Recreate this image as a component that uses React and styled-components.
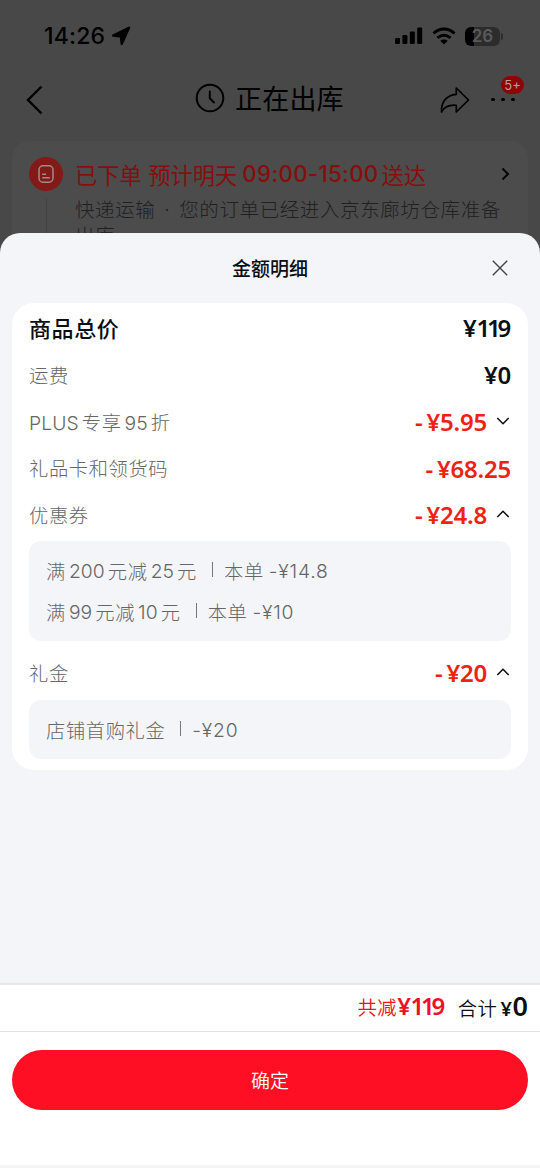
import { useState } from 'react';
import styled, { createGlobalStyle } from 'styled-components';

const details = [
    { id: 'total', label: ['商品总价'], price: '¥119', strong: true, height: 51 },
    { id: 'ship', label: ['运费'], price: '¥0', height: 43 },
    { id: 'plus', label: ['PLUS', '专享', '95', '折'], price: '¥5.95', minus: true, fold: true, height: 51 },
    { id: 'card', label: ['礼品卡和领货码'], price: '¥68.25', minus: true, height: 42 },
    {
        id: 'coupon', label: ['优惠券'], price: '¥24.8', minus: true, fold: true, height: 51,
        items: [
            [['满', '200', '元减', '25', '元'], '本单', '-¥14.8'],
            [['满', '99', '元减', '10', '元'], '本单', '-¥10'],
        ],
    },
    {
        id: 'gift', label: ['礼金'], price: '¥20', minus: true, fold: true, height: 59, top: 6,
        items: [[['店铺首购礼金'], '', '-¥20']],
    },
];

function Words({ list }) {
    return list.map((w, i) => (/[\dA-Z]/.test(w) ? <Num key={i} $first={i === 0}>{w}</Num> : <span key={i}>{w}</span>));
}

// the digit 1 sits closer to its neighbour than the other digits
function Amount({ value }) {
    return value.split('11').map((part, i) => (
        <span key={i}>
            {i > 0 && <Tight>11</Tight>}
            {part}
        </span>
    ));
}

function StatusBar() {
    return (
        <Status>
            <Clock>14:26</Clock>
            <svg width="20" height="20" viewBox="0 0 20 20">
                <path d="M2.200 9.500 18 1.800 10.700 18 10 10.500Z" fill="#000" stroke="#000" strokeWidth="2.400" strokeLinejoin="round" />
            </svg>
            <StatusIcons>
                <svg width="28" height="18" viewBox="0 0 28 18" fill="#000">
                    <rect x="0" y="11" width="5" height="6" rx="1.300" />
                    <rect x="7.400" y="8" width="5" height="9" rx="1.300" />
                    <rect x="14.800" y="4.500" width="5" height="12.500" rx="1.300" />
                    <rect x="22.200" y="0.500" width="5" height="16.500" rx="1.300" />
                </svg>
                <svg width="24" height="18" viewBox="0 0 24 18" fill="none" stroke="#000" strokeWidth="3">
                    <path d="M1.500 6.500C7.500.6 16.500.6 22.500 6.500" />
                    <path d="M5.500 10.800C9.300 7.300 14.700 7.300 18.500 10.800" />
                    <path d="M12 17.500 8.200 13.700C10.300 12 13.700 12 15.800 13.700Z" fill="#000" stroke="none" />
                </svg>
                <Battery><span>26</span></Battery>
            </StatusIcons>
        </Status>
    );
}

function Chevron({ up }) {
    return (
        <svg width="14" height="10" viewBox="0 0 14 10" fill="none" stroke="#111" strokeWidth="1.600">
            <path d={up ? 'M1.300 8 7 2.300 12.700 8' : 'M1.300 2 7 7.700 12.700 2'} />
        </svg>
    );
}

function App() {
    const [open, setOpen] = useState({ coupon: true, gift: true });

    const toggle = (id) => {
        setOpen({ ...open, [id]: !open[id] });
    };

    return (
        <Screen>
            <GlobalStyle />
            <StatusBar />
            <NavBar>
                <svg width="18" height="30" viewBox="0 0 18 30" fill="none" stroke="#000" strokeWidth="2.400">
                    <path d="M15.500 1.500 2 15 15.500 28.500" />
                </svg>
                <NavTitle>
                    <svg width="30" height="30" viewBox="0 0 30 30" fill="none" stroke="#000" strokeWidth="2" strokeLinecap="round">
                        <circle cx="15" cy="15" r="13.300" />
                        <path d="M14.800 8.500V15.300L19 19.500" />
                    </svg>
                    正在出库
                </NavTitle>
                <NavRight>
                    <svg width="30" height="28" viewBox="0 0 30 28" fill="none" stroke="#000" strokeWidth="1.700" strokeLinejoin="round">
                        <path d="M16.300 2 28.500 14 16.300 26V19.300C9 18.700 4.500 20.500 1.500 26 1 16 6.500 9 16.300 8.300Z" />
                    </svg>
                    <More>
                        <i /><i /><i />
                        <Badge>5+</Badge>
                    </More>
                </NavRight>
            </NavBar>
            <OrderCard>
                <Timeline>
                    <Dot>
                        <svg width="18" height="20" viewBox="0 0 18 20" fill="none" stroke="#a08c88" strokeWidth="1.500">
                            <rect x="2" y="1.800" width="14" height="16.400" rx="4" />
                            <path d="M5.200 10.300H9M5.200 13.800H12.800" />
                        </svg>
                    </Dot>
                    <Stem />
                </Timeline>
                <OrderText>
                    <OrderTitle>
                        已下单 预计明天<b>09:00-15:00</b>送达
                        <svg width="9" height="14" viewBox="0 0 9 14" fill="none" stroke="#000" strokeWidth="1.900">
                            <path d="M1.500 1.500 7 7 1.500 12.500" />
                        </svg>
                    </OrderTitle>
                    <OrderDesc>快递运输 · 您的订单已经进入京东廊坊仓库准备出库</OrderDesc>
                </OrderText>
            </OrderCard>

            <Sheet>
                <SheetHead>
                    金额明细
                    <Close>
                        <svg width="16" height="16" viewBox="0 0 16 16" stroke="#444" strokeWidth="1.400">
                            <path d="M.8.8 15.200 15.200M15.200.8.8 15.200" />
                        </svg>
                    </Close>
                </SheetHead>
                <Card>
                    {details.map((d) => (
                        <div key={d.id}>
                            <Row $height={d.height} $top={d.top}>
                                <Label $strong={d.strong}>
                                    <Words list={d.label} />
                                </Label>
                                <Price $red={d.minus}>
                                    {d.minus && <Minus>-</Minus>}
                                    <Amount value={d.price} />
                                </Price>
                                {d.fold && (
                                    <Fold onClick={() => toggle(d.id)}>
                                        <Chevron up={open[d.id]} />
                                    </Fold>
                                )}
                            </Row>
                            {d.items && open[d.id] && (
                                <SubBox>
                                    {d.items.map(([words, scope, value]) => (
                                        <SubRow key={value}>
                                            <Words list={words} />
                                            <Divider />
                                            {scope && <Scope>{scope}</Scope>}
                                            <Value>{value}</Value>
                                        </SubRow>
                                    ))}
                                </SubBox>
                            )}
                        </div>
                    ))}
                </Card>
                <Summary>
                    <Saved>共减<b><Amount value="¥119" /></b></Saved>
                    <Total>合计<small>¥</small><b>0</b></Total>
                </Summary>
                <Footer>
                    <Confirm>确定</Confirm>
                </Footer>
            </Sheet>
        </Screen>
    );
}

const GlobalStyle = createGlobalStyle`
    * {
        box-sizing: border-box;
    }
    body {
        margin: 0;
        background: #484848;
        font-family: Inter, "Noto Sans CJK SC", sans-serif;
    }
    button {
        font-family: inherit;
        border: 0;
        padding: 0;
        background: none;
    }
    svg {
        display: block;
        flex: none;
    }
`;

const Screen = styled.div`
    position: relative;
    width: 540px;
    height: 1168px;
    overflow: hidden;
    background: #484848;
`;

const Status = styled.div`
    display: flex;
    align-items: center;
    height: 72px;
    padding: 0 40px 0 44px;
`;

const Clock = styled.span`
    width: 67px;
    font-size: 23px;
    font-weight: 500;
    letter-spacing: 0.2px;
`;

const StatusIcons = styled.div`
    display: flex;
    align-items: center;
    gap: 9px;
    margin-left: auto;
`;

const Battery = styled.div`
    position: relative;
    width: 35px;
    height: 19px;
    border-radius: 6px;
    background: linear-gradient(90deg, #000 9px, #2c2c2c 9px);
    color: #5a5a5a;
    font-size: 17px;
    font-weight: 600;
    line-height: 19px;
    text-align: center;

    &::after {
        content: '';
        position: absolute;
        right: -3px;
        top: 6px;
        width: 2px;
        height: 7px;
        border-radius: 0 2px 2px 0;
        background: #2c2c2c;
    }
`;

const NavBar = styled.div`
    display: flex;
    align-items: center;
    height: 56px;
    padding: 0 25px 1px 26px;
`;

const NavTitle = styled.div`
    display: flex;
    align-items: center;
    gap: 10px;
    margin-left: 151px;
    font-size: 27px;
    font-weight: 400;
    letter-spacing: 0.2px;
    line-height: 40px;

    svg {
        margin-bottom: 3px;
    }
`;

const NavRight = styled.div`
    display: flex;
    align-items: center;
    gap: 21px;
    margin-left: auto;
`;

const More = styled.div`
    position: relative;
    display: flex;
    justify-content: space-between;
    width: 24px;

    i {
        width: 3.6px;
        height: 3.6px;
        border-radius: 50%;
        background: #000;
    }
`;

const Badge = styled.span`
    position: absolute;
    right: -9px;
    top: -22px;
    width: 23px;
    height: 18px;
    border-radius: 9px;
    background: #8e0508;
    color: #b5a0a0;
    font-size: 13px;
    line-height: 18px;
    text-align: center;
`;

const OrderCard = styled.div`
    display: flex;
    gap: 12px;
    height: 140px;
    margin: 13px 12px 0;
    padding: 16px 18px 0 17px;
    border-radius: 18px;
    background: #4c4c4c;
`;

const Timeline = styled.div`
    display: flex;
    flex-direction: column;
    align-items: center;
    width: 34px;
`;

const Dot = styled.div`
    display: flex;
    align-items: center;
    justify-content: center;
    width: 34px;
    height: 34px;
    border-radius: 50%;
    background: #821a18;
`;

const Stem = styled.div`
    width: 1px;
    height: 60px;
    margin-top: 7px;
    background: #424242;
`;

const OrderText = styled.div`
    flex: 1;
`;

const OrderTitle = styled.div`
    display: flex;
    align-items: center;
    height: 33px;
    color: #860f0b;
    font-size: 22.3px;
    font-weight: 400;
    white-space: pre;

    b {
        margin: 0 3px 0 5px;
        font-weight: 500;
        letter-spacing: 0.3px;
    }

    svg {
        margin-left: auto;
    }
`;

const OrderDesc = styled.div`
    color: #202020;
    font-size: 19.5px;
    font-weight: 300;
    letter-spacing: 0.6px;
    word-spacing: 2.8px;
    line-height: 26px;
    margin-top: 7px;
`;

const Sheet = styled.div`
    position: absolute;
    left: 0;
    right: 0;
    top: 233px;
    bottom: 0;
    display: flex;
    flex-direction: column;
    border-radius: 20px 20px 0 0;
    background: #f4f5f9;
    overflow: hidden;
`;

const SheetHead = styled.div`
    display: grid;
    place-items: center;
    position: relative;
    height: 70px;
    padding-bottom: 2px;
    color: #0b0d12;
    font-size: 19px;
    font-weight: 500;
`;

const Close = styled.button`
    position: absolute;
    right: 32px;
    top: 27px;
`;

const Card = styled.div`
    height: 467px;
    margin: 0 12px;
    padding: 0 17px;
    border-radius: 22px;
    background: #fff;
`;

const Row = styled.div`
    display: flex;
    align-items: center;
    height: ${({ $height }) => $height}px;
    padding-top: ${({ $top }) => $top || 0}px;
`;

const Label = styled.span`
    flex: 1;
    padding-bottom: ${({ $strong }) => ($strong ? 4 : 2)}px;
    color: ${({ $strong }) => ($strong ? '#0b0d12' : '#666')};
    font-size: ${({ $strong }) => ($strong ? '22px' : '19.3px')};
    font-weight: ${({ $strong }) => ($strong ? 500 : 300)};
    letter-spacing: 0.6px;
    white-space: nowrap;
`;

const Num = styled.span`
    margin: 0 3px 0 ${({ $first }) => ($first ? 0 : 3)}px;
    letter-spacing: 0.1px;
`;

const Price = styled.span`
    padding-bottom: 1px;
    color: ${({ $red }) => ($red ? '#ee2213' : '#0d0f16')};
    font-family: "Noto Sans", Inter, sans-serif;
    font-size: 24px;
    font-weight: 600;
    letter-spacing: -0.2px;
    line-height: 30px;
    white-space: nowrap;
`;

const Tight = styled.span`
    letter-spacing: -3.3px;
`;

const Minus = styled.span`
    margin-right: 4px;
`;

const Fold = styled.button`
    margin: 0 1px 3px 9px;
`;

const SubBox = styled.div`
    padding: 9px 17px;
    border-radius: 12px;
    background: #f4f5f9;
`;

const SubRow = styled.div`
    display: flex;
    align-items: center;
    height: 41px;
    color: #666;
    font-size: 19.3px;
    font-weight: 300;
    letter-spacing: 0.6px;
`;

const Divider = styled.i`
    width: 1px;
    height: 15px;
    margin: 0 11px 2px 15px;
    background: #777;
`;

const Scope = styled.span`
    margin-right: 5px;
`;

const Value = styled.span`
    letter-spacing: 0.8px;
`;

const Summary = styled.div`
    display: flex;
    align-items: center;
    justify-content: flex-end;
    gap: 13px;
    height: 49px;
    margin-top: auto;
    padding: 0 12px 2px 0;
    border-top: 2px solid #e6e7ea;
    border-bottom: 1px solid #dfe0e3;
    background: #fff;
    font-size: 19.3px;
    font-weight: 350;
    letter-spacing: 0.6px;
    line-height: 34px;

    b,
    small {
        font-family: "Noto Sans", Inter, sans-serif;
        font-weight: 600;
    }
`;

const Saved = styled.span`
    color: #ee1024;

    b {
        font-size: 24px;
        letter-spacing: -0.4px;
    }
`;

const Total = styled.span`
    color: #0d0f16;

    small {
        margin-left: 3px;
        font-size: 20px;
    }

    b {
        font-size: 27px;
        letter-spacing: 0;
    }
`;

const Footer = styled.div`
    height: 136px;
    padding: 18px 12px 0;
    border-bottom: 3px solid #f5f5f6;
    background: #fff;
`;

const Confirm = styled.button`
    width: 100%;
    height: 60px;
    padding-bottom: 1px;
    border-radius: 30px;
    background: #ff0f23;
    color: #fff;
    font-size: 19px;
    font-weight: 350;
`;

export default App;
